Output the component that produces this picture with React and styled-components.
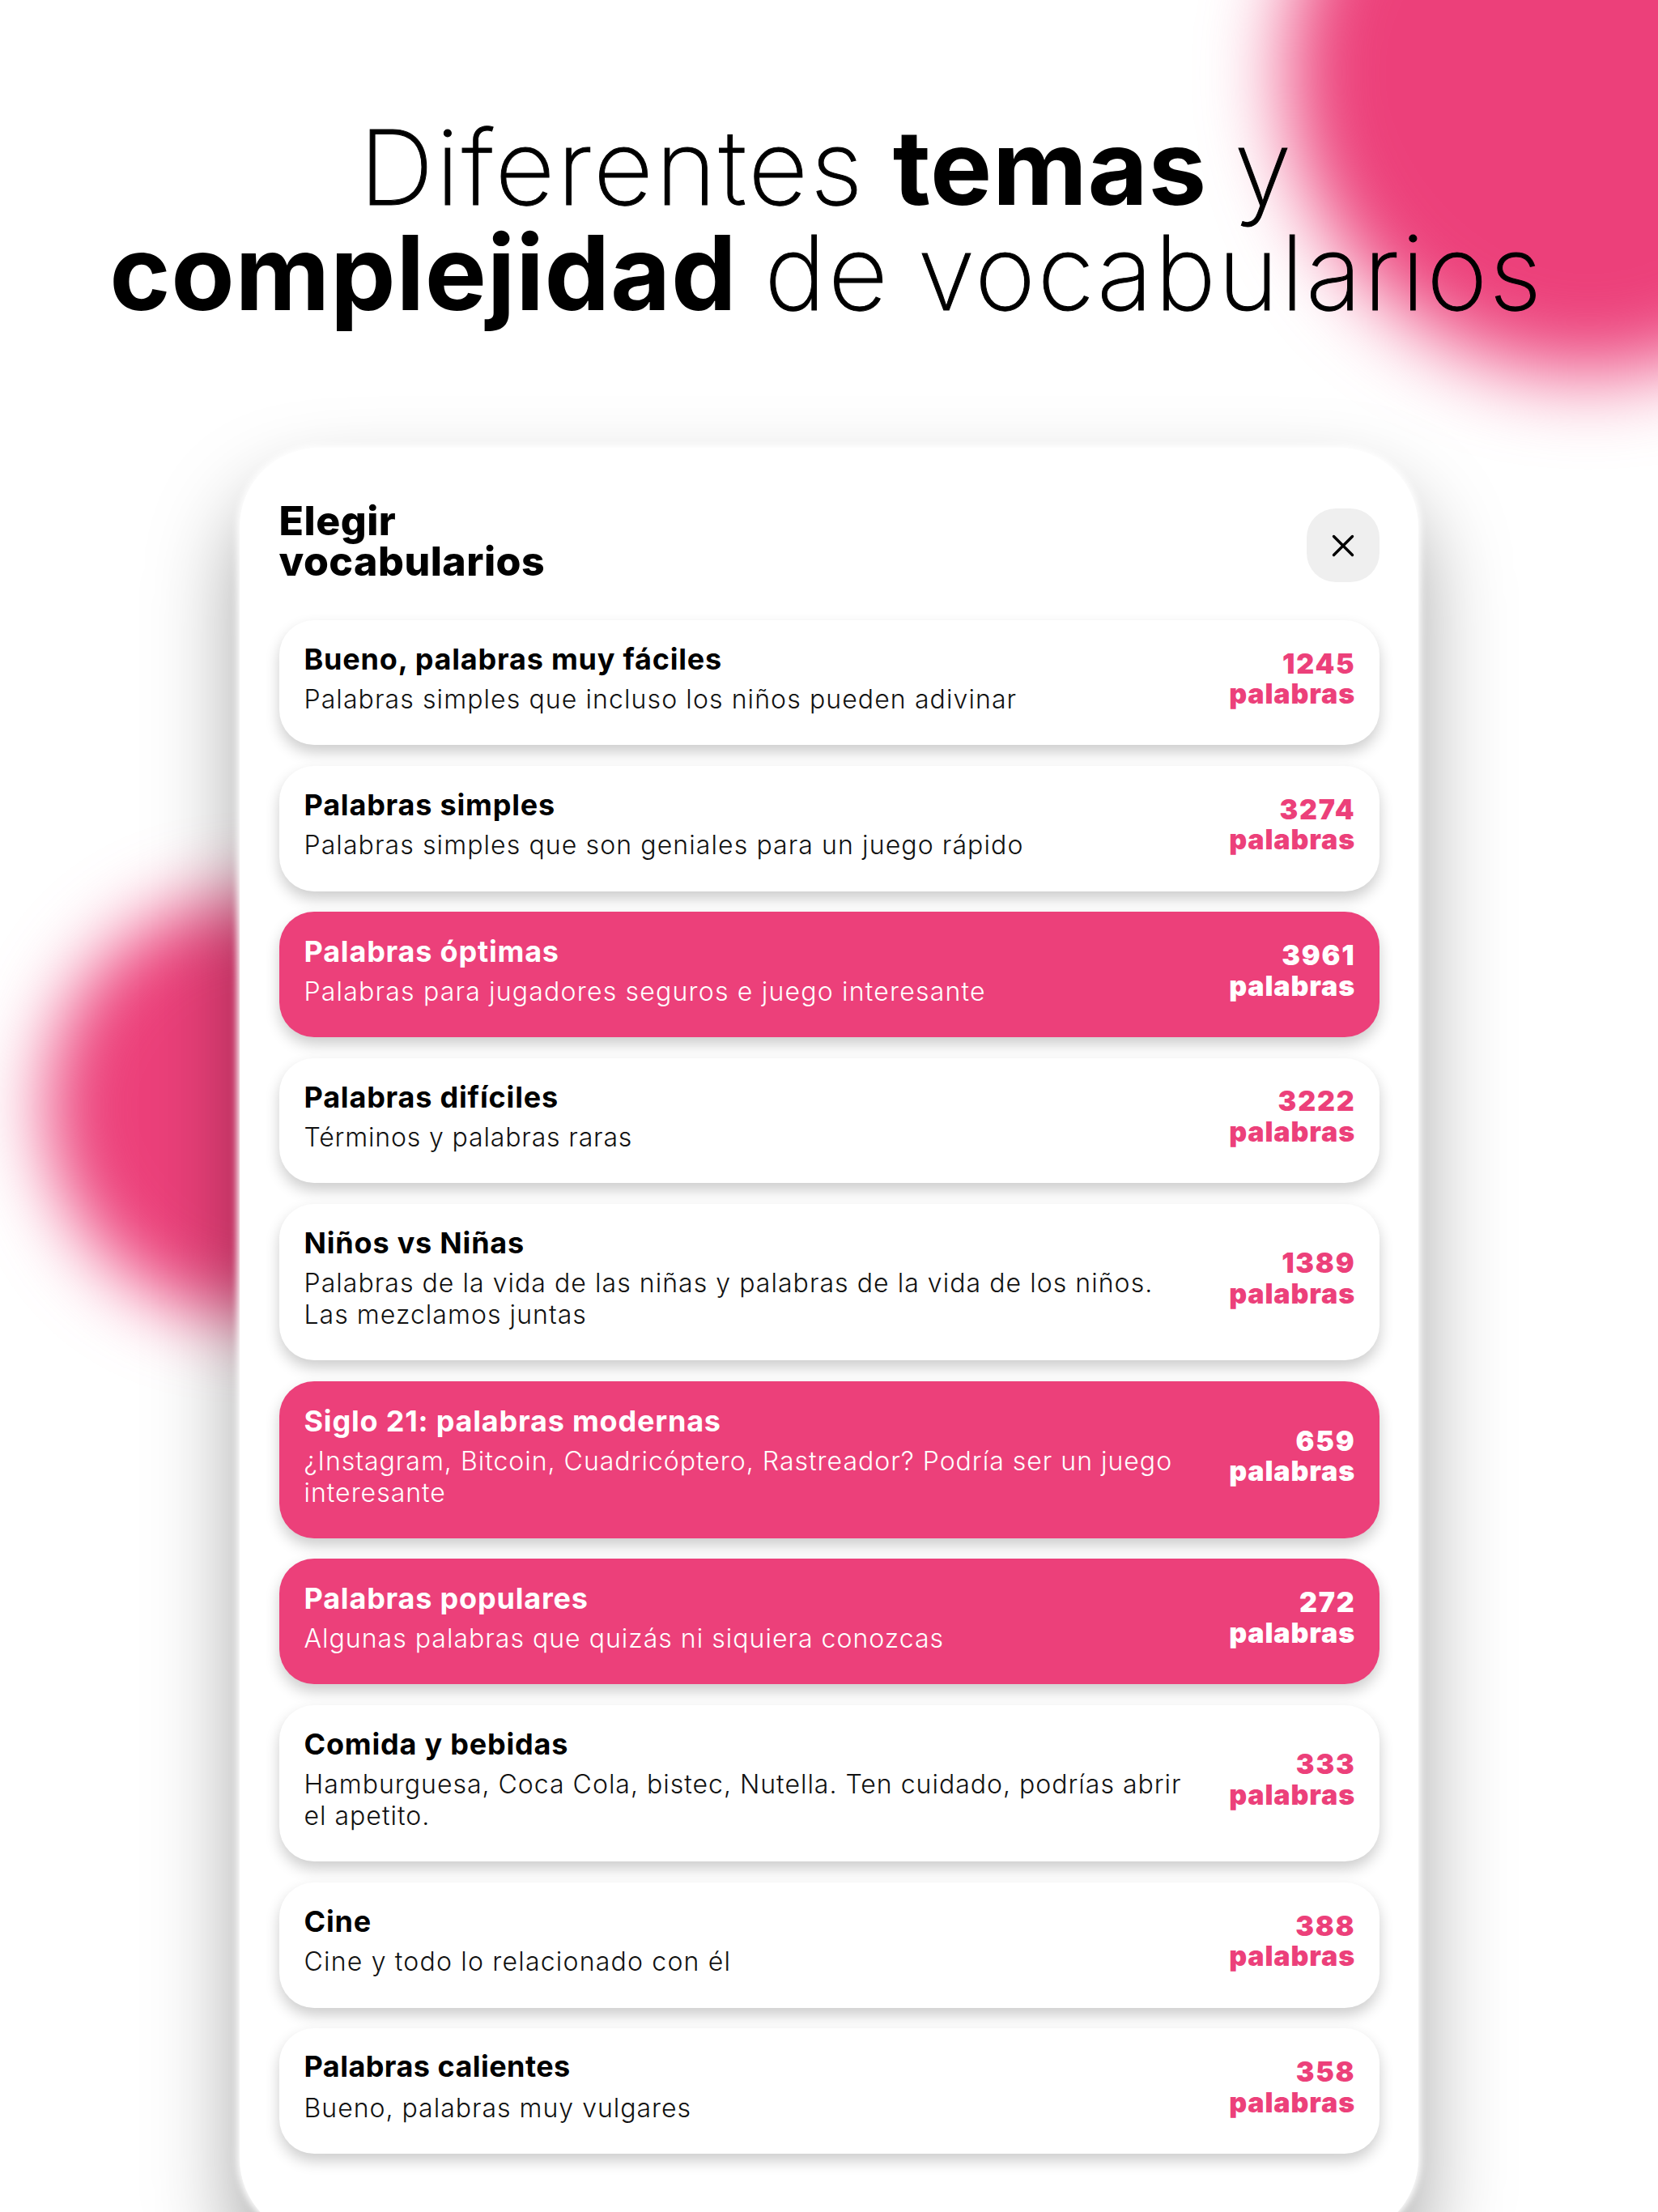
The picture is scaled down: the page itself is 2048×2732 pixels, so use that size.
import styled, { createGlobalStyle } from 'styled-components';

const PINK = '#ec407a';

const vocabularies = [
    { title: 'Bueno, palabras muy fáciles', text: 'Palabras simples que incluso los niños pueden adivinar', count: 1245 },
    { title: 'Palabras simples', text: 'Palabras simples que son geniales para un juego rápido', count: 3274 },
    { title: 'Palabras óptimas', text: 'Palabras para jugadores seguros e juego interesante', count: 3961, selected: true, spacing: 1.2 },
    { title: 'Palabras difíciles', text: 'Términos y palabras raras', count: 3222, spacing: 0.85 },
    { title: 'Niños vs Niñas', text: 'Palabras de la vida de las niñas y palabras de la vida de los niños.\nLas mezclamos juntas', count: 1389, spacing: 1.05 },
    { title: 'Siglo 21: palabras modernas', text: '¿Instagram, Bitcoin, Cuadricóptero, Rastreador? Podría ser un juego\ninteresante', count: 659, selected: true, spacing: 1 },
    { title: 'Palabras populares', text: 'Algunas palabras que quizás ni siquiera conozcas', count: 272, selected: true, spacing: 1.02 },
    { title: 'Comida y bebidas', text: 'Hamburguesa, Coca Cola, bistec, Nutella. Ten cuidado, podrías abrir\nel apetito.', count: 333, spacing: 1 },
    { title: 'Cine', text: 'Cine y todo lo relacionado con él', count: 388, spacing: 1.2 },
    { title: 'Palabras calientes', text: 'Bueno, palabras muy vulgares', count: 358, spacing: 1, tight: true },
];

function App() {
    return (
        <Page>
            <GlobalStyle />
            <Blob $x={1962} $y={90} $r={372} $blur={50} />
            <Blob $x={318} $y={1368} $r={260} $blur={45} />
            <Headline>
                Diferentes <strong>temas</strong> y<br />
                <strong>complejidad</strong> de <Word>vocabularios</Word>
            </Headline>
            <Panel>
                <PanelHeader>
                    <PanelTitle>Elegir<br />vocabularios</PanelTitle>
                    <CloseButton aria-label="Cerrar">
                        <svg width="28" height="28" viewBox="0 0 28 28" fill="none">
                            <path d="M2.5 2.5 L25.5 25.5 M25.5 2.5 L2.5 25.5" stroke="#000" strokeWidth="3.4" strokeLinecap="round" />
                        </svg>
                    </CloseButton>
                </PanelHeader>
                <List>
                    {vocabularies.map((item) => (
                        <Card key={item.title} $selected={item.selected}>
                            <Info>
                                <CardTitle $tight={item.tight}>{item.title}</CardTitle>
                                <CardText $selected={item.selected} $spacing={item.spacing}>{item.text}</CardText>
                            </Info>
                            <Count $selected={item.selected}>
                                <Number>{item.count}</Number>
                                <span>palabras</span>
                            </Count>
                        </Card>
                    ))}
                </List>
            </Panel>
        </Page>
    );
}

export default App;

const GlobalStyle = createGlobalStyle`
    * {
        box-sizing: border-box;
    }
    body {
        margin: 0;
        background: #ffffff;
        font-family: Inter, 'Liberation Sans', sans-serif;
        color: #000000;
    }
`;

const Page = styled.div`
    position: relative;
    display: flex;
    flex-direction: column;
    align-items: center;
    width: 2048px;
    height: 2732px;
    padding-top: 142px;
    overflow: hidden;
`;

const Blob = styled.div`
    position: absolute;
    left: ${(p) => p.$x - p.$r}px;
    top: ${(p) => p.$y - p.$r}px;
    width: ${(p) => p.$r * 2}px;
    height: ${(p) => p.$r * 2}px;
    border-radius: 50%;
    background: ${PINK};
    filter: blur(${(p) => p.$blur}px);
`;

const Headline = styled.h1`
    position: relative;
    margin: 0 6px 0 0;
    font-size: 128px;
    line-height: 130px;
    font-weight: 250;
    letter-spacing: 3px;
    word-spacing: -5px;
    text-align: center;
    white-space: nowrap;
    -webkit-text-stroke: 1px #000000;
    strong {
        font-weight: 700;
        letter-spacing: 0.7px;
        -webkit-text-stroke: 0;
    }
`;

const Word = styled.span`
    letter-spacing: 2.4px;
`;

const Panel = styled.section`
    position: relative;
    flex-shrink: 0;
    width: 1456px;
    height: 2211px;
    margin-top: 151px;
    padding: 65px 48px 0 49px;
    border-radius: 98px;
    background: #ffffff;
    box-shadow: 0 0 8px 3px #ffffff, 0 60px 110px 3px rgba(0, 0, 0, 0.36);
`;

const PanelHeader = styled.header`
    display: flex;
    justify-content: space-between;
    height: 101px;
    margin-bottom: 46.8px;
`;

const PanelTitle = styled.h2`
    margin: 0 0 0 -0.5px;
    font-size: 50px;
    line-height: 50px;
    font-weight: 800;
    letter-spacing: 0.5px;
`;

const CloseButton = styled.button`
    display: flex;
    justify-content: center;
    align-items: center;
    width: 90px;
    height: 91px;
    margin-top: 10px;
    padding: 0;
    border: none;
    border-radius: 36px;
    background: #efefef;
`;

const List = styled.div`
    display: flex;
    flex-direction: column;
    gap: 25.7px;
`;

const Card = styled.article`
    display: flex;
    justify-content: space-between;
    align-items: center;
    padding: 26.4px 30px 37.2px 30.5px;
    border-radius: 43px;
    background: ${(p) => (p.$selected ? PINK : '#ffffff')};
    color: ${(p) => (p.$selected ? '#ffffff' : '#000000')};
    box-shadow: 0 9px 18px rgba(0, 0, 0, 0.2);
`;

const Info = styled.div`
    display: flex;
    flex-direction: column;
    gap: 8px;
`;

const CardTitle = styled.h3`
    margin: ${(p) => (p.$tight ? '-2px 0 2px' : 0)};
    font-size: 36px;
    line-height: 44px;
    font-weight: 700;
    letter-spacing: ${(p) => (p.$tight ? 0.45 : 0.8)}px;
`;

const CardText = styled.p`
    margin: 0;
    font-size: 32px;
    line-height: 39px;
    font-weight: 300;
    letter-spacing: ${(p) => p.$spacing ?? 1.1}px;
    color: ${(p) => (p.$selected ? '#ffffff' : '#111111')};
    white-space: pre;
`;

const Count = styled.div`
    display: flex;
    flex-direction: column;
    align-items: flex-end;
    padding-top: 1px;
    font-size: 34px;
    line-height: 37.5px;
    font-weight: 900;
    letter-spacing: 0.85px;
    color: ${(p) => (p.$selected ? '#ffffff' : PINK)};
`;

const Number = styled.span`
    margin-right: -0.5px;
    letter-spacing: 1.8px;
`;
